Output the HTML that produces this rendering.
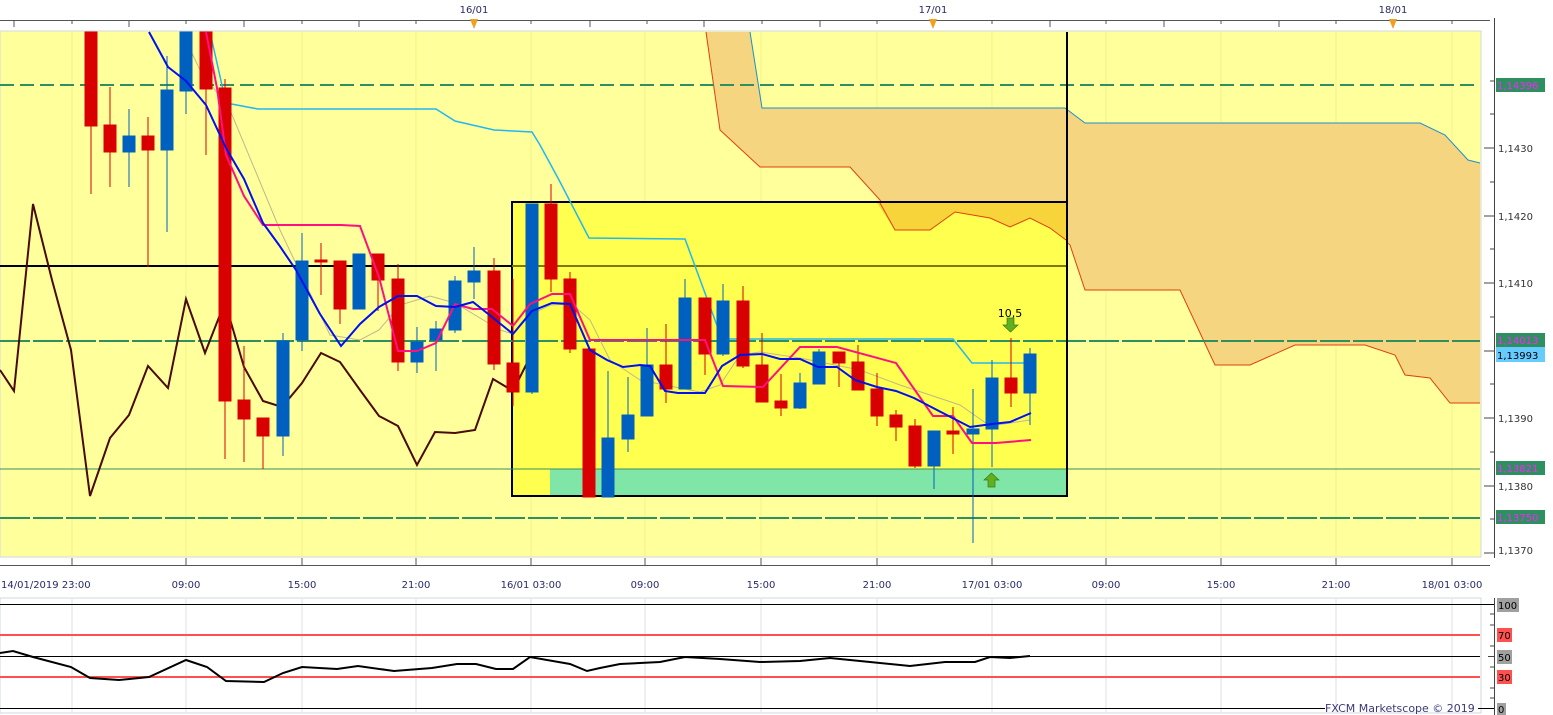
<!DOCTYPE html>
<html><head><meta charset="utf-8"><style>
html,body{margin:0;padding:0;background:#fff;width:1553px;height:715px;overflow:hidden}
svg{display:block}
text{font-family:"DejaVu Sans","Liberation Sans",sans-serif;font-size:10px}
</style></head><body>
<svg width="1553" height="715" viewBox="0 0 1553 715" xmlns="http://www.w3.org/2000/svg">
<rect width="1553" height="715" fill="#fff"/>
<!-- top strip -->
<line x1="0" y1="20.5" x2="1490" y2="20.5" stroke="#555"/>
<g stroke="#555">
<line x1="416" y1="20" x2="416" y2="24"/><line x1="474" y1="20" x2="474" y2="27"/><line x1="531" y1="20" x2="531" y2="24"/><line x1="590" y1="20" x2="590" y2="27"/><line x1="647" y1="20" x2="647" y2="24"/><line x1="704" y1="20" x2="704" y2="27"/><line x1="762" y1="20" x2="762" y2="24"/><line x1="820" y1="20" x2="820" y2="27"/><line x1="877" y1="20" x2="877" y2="24"/><line x1="933" y1="20" x2="933" y2="27"/><line x1="992" y1="20" x2="992" y2="24"/>
<line x1="14" y1="20" x2="14" y2="27"/><line x1="72" y1="20" x2="72" y2="24"/><line x1="129" y1="20" x2="129" y2="27"/><line x1="186" y1="20" x2="186" y2="24"/><line x1="244" y1="20" x2="244" y2="27"/><line x1="302" y1="20" x2="302" y2="24"/><line x1="359" y1="20" x2="359" y2="27"/>
<line x1="1050" y1="20" x2="1050" y2="27"/><line x1="1106" y1="20" x2="1106" y2="24"/><line x1="1164" y1="20" x2="1164" y2="27"/><line x1="1221" y1="20" x2="1221" y2="24"/><line x1="1279" y1="20" x2="1279" y2="27"/><line x1="1336" y1="20" x2="1336" y2="24"/><line x1="1393" y1="20" x2="1393" y2="27"/><line x1="1452" y1="20" x2="1452" y2="24"/>
</g>
<g fill="#f0a020"><polygon points="470,19 478,19 474,29"/><polygon points="929,19 937,19 933,29"/><polygon points="1389,19 1397,19 1393,29"/></g>
<g fill="#2a2a6a"><text x="474" y="13" text-anchor="middle">16/01</text><text x="933" y="13" text-anchor="middle">17/01</text><text x="1393" y="13" text-anchor="middle">18/01</text></g>
<!-- plot bg -->
<rect x="0" y="31" width="1481" height="526" fill="#ffff9c" stroke="#d0d8e0"/>
<g stroke="#f4f08a" stroke-width="1"><line x1="72" y1="32" x2="72" y2="556"/><line x1="186" y1="32" x2="186" y2="556"/><line x1="302" y1="32" x2="302" y2="556"/><line x1="416" y1="32" x2="416" y2="556"/><line x1="531" y1="32" x2="531" y2="556"/><line x1="645" y1="32" x2="645" y2="556"/><line x1="761" y1="32" x2="761" y2="556"/><line x1="877" y1="32" x2="877" y2="556"/><line x1="992" y1="32" x2="992" y2="556"/><line x1="1106" y1="32" x2="1106" y2="556"/><line x1="1221" y1="32" x2="1221" y2="556"/><line x1="1336" y1="32" x2="1336" y2="556"/><line x1="1452" y1="32" x2="1452" y2="556"/></g>
<!-- cloud -->
<polygon fill="#f5d580" points="706,32 750,32 762,108 1065,108 1085,123 1420,123 1445,135 1468,160 1480,163 1480,403 1450,403 1430,378 1405,375 1395,355 1365,345 1295,345 1250,365 1215,365 1180,290 1085,290 1070,245 1050,228 1030,218 1010,227 990,218 955,212 930,230 895,230 880,200 850,167 760,167 720,130"/>
<polyline fill="none" stroke="#e04010" stroke-width="1" points="706,32 720,130 760,167 850,167 880,200 895,230 930,230 955,212 990,218 1010,227 1030,218 1050,228 1070,245 1085,290 1180,290 1215,365 1250,365 1295,345 1365,345 1395,355 1405,375 1430,378 1450,403 1480,403"/>
<polyline fill="none" stroke="#1a90d0" stroke-width="1" points="750,32 762,108 1065,108 1085,123 1420,123 1445,135 1468,160 1480,163"/>
<!-- box -->
<rect x="512" y="202" width="555" height="294" fill="#ffff50"/>
<polygon fill="#f7d43a" points="877,203 1066,203 1066,240 1050,228 1030,218 1010,227 990,218 955,212 930,230 895,230"/>
<polyline fill="none" stroke="#e04010" points="880,203 895,230 930,230 955,212 990,218 1010,227 1030,218 1050,228 1066,240"/>
<rect x="550" y="469" width="516" height="27" fill="#80e6a8"/>
<rect x="512" y="202" width="555" height="294" fill="none" stroke="#000" stroke-width="2"/>
<!-- horizontal lines -->
<line x1="0" y1="85" x2="1480" y2="85" stroke="#2e9060" stroke-width="2" stroke-dasharray="14,6"/>
<line x1="0" y1="266" x2="512" y2="266" stroke="#000" stroke-width="2"/>
<line x1="512" y1="266" x2="1067" y2="266" stroke="#807800" stroke-width="2"/>
<line x1="0" y1="341" x2="1480" y2="341" stroke="#2e9060" stroke-width="2" stroke-dasharray="30,3"/>
<line x1="0" y1="469" x2="1480" y2="469" stroke="#3a9060" stroke-width="1"/>
<line x1="0" y1="518" x2="1480" y2="518" stroke="#2e9060" stroke-width="2" stroke-dasharray="30,3"/>
<line x1="1067" y1="32" x2="1067" y2="497" stroke="#000" stroke-width="2"/>
<!-- cyan kijun -->
<polyline fill="none" stroke="#20b8f0" stroke-width="1.5" points="210,32 226,103 258,109 436,109 455,121 494,130 532,132 540,145 559,180 589,238 685,239 722,339 953,339 972,363 1031,363"/>
<!-- grey -->
<polyline fill="none" stroke="#c0b888" stroke-width="1" points="182,32 200,70 230,110 280,230 330,335 360,340 379,330 400,305 430,296 455,303 480,318 500,330 513,334 530,315 550,305 572,304 590,320 610,360 640,380 680,388 700,392 720,385 740,355 760,352 800,358 860,370 900,385 960,405 990,426 1030,420"/>
<!-- brown -->
<polyline fill="none" stroke="#4a0a08" stroke-width="2" points="0,370 14,391 33,204 52,280 71,350 90,496 110,438 129,415 148,366 168,388 186,299 205,353 225,302 244,367 263,401 282,407 302,383 321,353 340,362 360,390 379,416 398,426 417,465 435,432 455,433 475,430 493,379 513,391 531,355"/>
<!-- candles -->
<g stroke-width="1">
<g stroke="#d80000" fill="#d80000">
<line x1="91" y1="32" x2="91" y2="194"/><rect x="85" y="32" width="12" height="94"/>
<line x1="110" y1="87" x2="110" y2="187"/><rect x="104" y="125" width="12" height="27"/>
<line x1="148" y1="117" x2="148" y2="267"/><rect x="142" y="136" width="12" height="14"/>
<line x1="206" y1="32" x2="206" y2="155"/><rect x="200" y="32" width="12" height="57"/>
<line x1="225" y1="79" x2="225" y2="459"/><rect x="219" y="88" width="12" height="313"/>
<line x1="244" y1="346" x2="244" y2="462"/><rect x="238" y="400" width="12" height="19"/>
<line x1="263" y1="418" x2="263" y2="469"/><rect x="257" y="418" width="12" height="18"/>
<line x1="321" y1="243" x2="321" y2="295"/><rect x="315" y="260" width="12" height="2"/>
<line x1="340" y1="261" x2="340" y2="324"/><rect x="334" y="261" width="12" height="48"/>
<line x1="378" y1="254" x2="378" y2="311"/><rect x="372" y="254" width="12" height="26"/>
<line x1="398" y1="264" x2="398" y2="371"/><rect x="392" y="279" width="12" height="83"/>
<line x1="494" y1="258" x2="494" y2="370"/><rect x="488" y="271" width="12" height="93"/>
<line x1="513" y1="279" x2="513" y2="406"/><rect x="507" y="363" width="12" height="29"/>
<line x1="551" y1="184" x2="551" y2="292"/><rect x="545" y="204" width="12" height="75"/>
<line x1="570" y1="272" x2="570" y2="353"/><rect x="564" y="279" width="12" height="70"/>
<rect x="583" y="349" width="12" height="148"/>
<line x1="666" y1="324" x2="666" y2="403"/><rect x="660" y="365" width="12" height="24"/>
<line x1="705" y1="298" x2="705" y2="375"/><rect x="699" y="298" width="12" height="56"/>
<line x1="743" y1="286" x2="743" y2="368"/><rect x="737" y="301" width="12" height="65"/>
<line x1="762" y1="333" x2="762" y2="402"/><rect x="756" y="365" width="12" height="37"/>
<line x1="781" y1="374" x2="781" y2="416"/><rect x="775" y="401" width="12" height="7"/>
<line x1="839" y1="352" x2="839" y2="387"/><rect x="833" y="352" width="12" height="11"/>
<line x1="858" y1="345" x2="858" y2="390"/><rect x="852" y="362" width="12" height="28"/>
<line x1="877" y1="373" x2="877" y2="426"/><rect x="871" y="389" width="12" height="27"/>
<line x1="896" y1="410" x2="896" y2="441"/><rect x="890" y="415" width="12" height="12"/>
<line x1="915" y1="419" x2="915" y2="468"/><rect x="909" y="426" width="12" height="40"/>
<line x1="953" y1="407" x2="953" y2="454"/><rect x="947" y="431" width="12" height="3"/>
<line x1="1011" y1="338" x2="1011" y2="407"/><rect x="1005" y="378" width="12" height="15"/>
</g>
<g stroke="#0060c0" fill="#0060c0">
<line x1="129" y1="109" x2="129" y2="187"/><rect x="123" y="136" width="12" height="16"/>
<line x1="167" y1="56" x2="167" y2="232"/><rect x="161" y="90" width="12" height="60"/>
<line x1="186" y1="32" x2="186" y2="114"/><rect x="180" y="32" width="12" height="59"/>
<line x1="283" y1="333" x2="283" y2="456"/><rect x="277" y="341" width="12" height="95"/>
<line x1="302" y1="233" x2="302" y2="351"/><rect x="296" y="261" width="12" height="79"/>
<line x1="359" y1="254" x2="359" y2="309"/><rect x="353" y="254" width="12" height="55"/>
<line x1="417" y1="327" x2="417" y2="373"/><rect x="411" y="342" width="12" height="20"/>
<line x1="436" y1="321" x2="436" y2="371"/><rect x="430" y="329" width="12" height="11"/>
<line x1="455" y1="276" x2="455" y2="333"/><rect x="449" y="281" width="12" height="49"/>
<line x1="474" y1="247" x2="474" y2="299"/><rect x="468" y="271" width="12" height="11"/>
<line x1="532" y1="204" x2="532" y2="394"/><rect x="526" y="204" width="12" height="188"/>
<line x1="608" y1="371" x2="608" y2="497"/><rect x="602" y="438" width="12" height="59"/>
<line x1="628" y1="377" x2="628" y2="452"/><rect x="622" y="415" width="12" height="24"/>
<line x1="647" y1="328" x2="647" y2="416"/><rect x="641" y="365" width="12" height="51"/>
<line x1="685" y1="279" x2="685" y2="389"/><rect x="679" y="298" width="12" height="91"/>
<line x1="723" y1="284" x2="723" y2="356"/><rect x="717" y="301" width="12" height="53"/>
<line x1="800" y1="373" x2="800" y2="409"/><rect x="794" y="383" width="12" height="25"/>
<line x1="819" y1="349" x2="819" y2="384"/><rect x="813" y="352" width="12" height="32"/>
<line x1="934" y1="431" x2="934" y2="489"/><rect x="928" y="431" width="12" height="35"/>
<line x1="973" y1="389" x2="973" y2="543"/><rect x="967" y="429" width="12" height="5"/>
<line x1="992" y1="360" x2="992" y2="467"/><rect x="986" y="378" width="12" height="51"/>
<line x1="1030" y1="348" x2="1030" y2="425"/><rect x="1024" y="354" width="12" height="39"/>
</g>
</g>
<!-- pink -->
<polyline fill="none" stroke="#ff1080" stroke-width="2" points="206,32 217,88 226,155 244,196 263,225 341,225 360,226 379,277 398,351 417,351 436,343 455,304 473,309 492,309 513,326 530,304 552,294 570,294 590,340 705,340 723,386 763,387 800,347 837,347 896,363 933,416 953,416 972,443 996,443 1031,440"/>
<!-- blue -->
<polyline fill="none" stroke="#0010f0" stroke-width="2" points="149,32 168,67 186,81 206,105 226,148 244,179 263,223 279,245 296,270 320,314 341,346 360,324 379,307 398,296 417,296 436,306 455,307 473,302 492,317 513,334 532,311 552,303 570,304 590,350 607,360 623,367 640,365 650,366 665,391 678,393 705,393 722,366 740,355 762,354 780,359 800,359 818,367 837,367 855,380 877,387 896,391 914,398 937,410 970,427 992,424 1010,422 1031,413"/>
<!-- arrows & label -->
<text x="1010" y="317" text-anchor="middle" fill="#000" style="font-size:11px">10,5</text>
<polygon points="1007,318 1014,318 1014,325 1018,325 1010.5,332 1003,325 1007,325" fill="#60b020" stroke="#3a7a10" stroke-width="0.7"/>
<polygon points="988,487 995,487 995,480 999,480 991.5,473 984,480 988,480" fill="#60b020" stroke="#3a7a10" stroke-width="0.7"/>
<!-- right axis -->
<line x1="1494.5" y1="18" x2="1494.5" y2="558" stroke="#444"/>
<g stroke="#444">
<line x1="1484" y1="148" x2="1494" y2="148"/><line x1="1484" y1="216" x2="1494" y2="216"/><line x1="1484" y1="283" x2="1494" y2="283"/><line x1="1484" y1="351" x2="1494" y2="351"/><line x1="1484" y1="418" x2="1494" y2="418"/><line x1="1484" y1="486" x2="1494" y2="486"/><line x1="1484" y1="553" x2="1494" y2="553"/>
<line x1="1490" y1="81" x2="1494" y2="81"/><line x1="1490" y1="114" x2="1494" y2="114"/><line x1="1490" y1="182" x2="1494" y2="182"/><line x1="1490" y1="249" x2="1494" y2="249"/><line x1="1490" y1="317" x2="1494" y2="317"/><line x1="1490" y1="384" x2="1494" y2="384"/><line x1="1490" y1="452" x2="1494" y2="452"/><line x1="1490" y1="519" x2="1494" y2="519"/>
</g>
<g fill="#333"><text x="1498" y="152">1,1430</text><text x="1498" y="220">1,1420</text><text x="1498" y="287">1,1410</text><text x="1498" y="422">1,1390</text><text x="1498" y="490">1,1380</text><text x="1498" y="554">1,1370</text></g>
<g style="font-size:11px">
<rect x="1496" y="78" width="49" height="14" fill="#2e9060"/><text x="1497" y="89" fill="#ff20ff">1,14396</text>
<rect x="1496" y="333" width="49" height="14" fill="#2e9060"/><text x="1497" y="344" fill="#ff20ff">1,14013</text>
<rect x="1496" y="347" width="49" height="15" fill="#66ccff"/><text x="1497" y="359" fill="#000">1,13993</text>
<rect x="1496" y="461" width="49" height="14" fill="#2e9060"/><text x="1497" y="472" fill="#ff20ff">1,13821</text>
<rect x="1496" y="510" width="49" height="14" fill="#2e9060"/><text x="1497" y="521" fill="#ff20ff">1,13750</text>
</g>
<!-- bottom axis -->
<line x1="0" y1="565.5" x2="1490" y2="565.5" stroke="#555"/>
<g stroke="#555"><line x1="72" y1="558" x2="72" y2="566"/><line x1="186" y1="558" x2="186" y2="566"/><line x1="302" y1="558" x2="302" y2="566"/><line x1="416" y1="558" x2="416" y2="566"/><line x1="531" y1="558" x2="531" y2="566"/><line x1="645" y1="558" x2="645" y2="566"/><line x1="761" y1="558" x2="761" y2="566"/><line x1="877" y1="558" x2="877" y2="566"/><line x1="992" y1="558" x2="992" y2="566"/><line x1="1106" y1="558" x2="1106" y2="566"/><line x1="1221" y1="558" x2="1221" y2="566"/><line x1="1336" y1="558" x2="1336" y2="566"/><line x1="1452" y1="558" x2="1452" y2="566"/></g>
<g fill="#2a2a6a"><text x="1" y="588">14/01/2019 23:00</text><text x="186" y="588" text-anchor="middle">09:00</text><text x="302" y="588" text-anchor="middle">15:00</text><text x="416" y="588" text-anchor="middle">21:00</text><text x="531" y="588" text-anchor="middle">16/01 03:00</text><text x="645" y="588" text-anchor="middle">09:00</text><text x="761" y="588" text-anchor="middle">15:00</text><text x="877" y="588" text-anchor="middle">21:00</text><text x="992" y="588" text-anchor="middle">17/01 03:00</text><text x="1106" y="588" text-anchor="middle">09:00</text><text x="1221" y="588" text-anchor="middle">15:00</text><text x="1336" y="588" text-anchor="middle">21:00</text><text x="1452" y="588" text-anchor="middle">18/01 03:00</text></g>
<!-- oscillator -->
<rect x="0" y="598" width="1481" height="115" fill="#fff" stroke="#d0d8e0"/>
<g stroke="#e0e0e0"><line x1="72" y1="599" x2="72" y2="712"/><line x1="186" y1="599" x2="186" y2="712"/><line x1="302" y1="599" x2="302" y2="712"/><line x1="416" y1="599" x2="416" y2="712"/><line x1="531" y1="599" x2="531" y2="712"/><line x1="645" y1="599" x2="645" y2="712"/><line x1="761" y1="599" x2="761" y2="712"/><line x1="877" y1="599" x2="877" y2="712"/><line x1="992" y1="599" x2="992" y2="712"/><line x1="1106" y1="599" x2="1106" y2="712"/><line x1="1221" y1="599" x2="1221" y2="712"/><line x1="1336" y1="599" x2="1336" y2="712"/><line x1="1452" y1="599" x2="1452" y2="712"/></g>
<line x1="0" y1="604.5" x2="1495" y2="604.5" stroke="#000"/>
<line x1="0" y1="635" x2="1480" y2="635" stroke="#ff5050" stroke-width="2"/>
<line x1="0" y1="656.5" x2="1480" y2="656.5" stroke="#000"/>
<line x1="0" y1="677" x2="1480" y2="677" stroke="#ff5050" stroke-width="2"/>
<line x1="0" y1="708.5" x2="1325" y2="708.5" stroke="#000"/>
<line x1="1478" y1="708.5" x2="1495" y2="708.5" stroke="#000"/>
<polyline fill="none" stroke="#000" stroke-width="2" points="0,653 13,651 33,657 71,667 90,678 119,680 149,677 186,660 207,667 226,681 264,682 283,673 302,667 337,669 358,666 394,671 432,668 457,664 476,664 496,669 513,669 530,657 570,664 587,671 600,668 620,664 660,662 685,657 720,659 760,662 800,661 830,658 870,662 910,666 945,662 975,662 990,657 1010,658 1030,656"/>
<text x="1325" y="712" fill="#3a3a7a" style="font-size:11px">FXCM Marketscope © 2019</text>
<line x1="1494.5" y1="598" x2="1494.5" y2="715" stroke="#444"/>
<g stroke="#444"><line x1="1490" y1="614" x2="1494" y2="614"/><line x1="1490" y1="625" x2="1494" y2="625"/><line x1="1490" y1="646" x2="1494" y2="646"/><line x1="1488" y1="656.5" x2="1494" y2="656.5"/><line x1="1490" y1="667" x2="1494" y2="667"/><line x1="1490" y1="688" x2="1494" y2="688"/><line x1="1490" y1="698" x2="1494" y2="698"/></g>
<g style="font-size:11px">
<rect x="1497" y="598" width="22" height="14" fill="#a0a0a0"/><text x="1498" y="609" fill="#000">100</text>
<rect x="1497" y="628" width="15" height="14" fill="#ff5050"/><text x="1498" y="639" fill="#000">70</text>
<rect x="1497" y="650" width="15" height="14" fill="#a0a0a0"/><text x="1498" y="661" fill="#000">50</text>
<rect x="1497" y="670" width="15" height="14" fill="#ff5050"/><text x="1498" y="681" fill="#000">30</text>
<rect x="1497" y="703" width="9" height="12" fill="#a0a0a0"/><text x="1498" y="713" fill="#000">0</text>
</g>
</svg>
</body></html>
